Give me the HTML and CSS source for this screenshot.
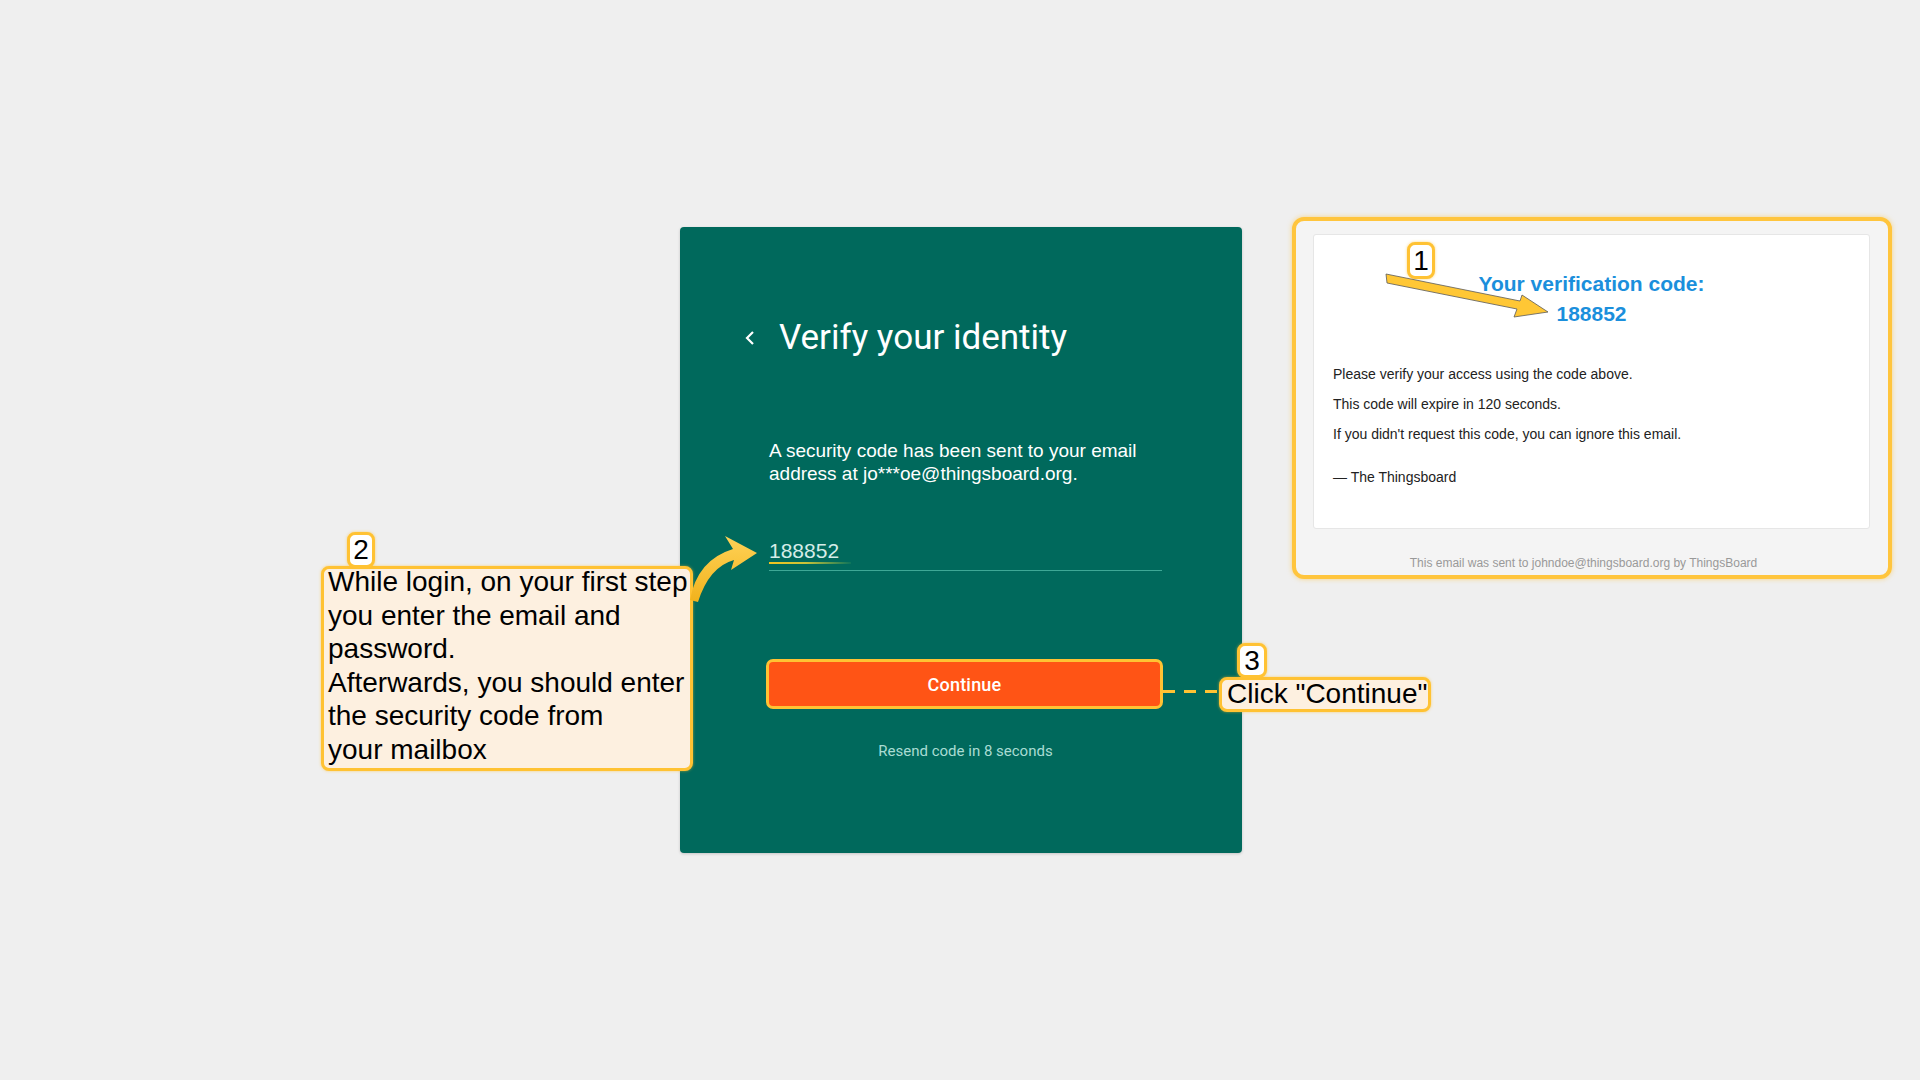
FILE: index.html
```html
<!DOCTYPE html>
<html lang="en">
<head>
<meta charset="utf-8">
<title>Verify your identity</title>
<link rel="stylesheet" href="styles.css">
</head>
<body>
<div class="stage">
  <main class="row">
    <section class="card">
      <header class="card-head">
        <svg class="back" width="12" height="16" viewBox="0 0 12 16"><polyline points="9,2 3,8 9,14" fill="none" stroke="#ffffff" stroke-width="2.2"/></svg>
        <h1 class="title">Verify your identity</h1>
      </header>
      <p class="desc">A security code has been sent to your email address at jo***oe@thingsboard.org.</p>
      <div class="field">
        <span class="field-value">188852</span>
        <span class="field-mark"></span>
      </div>
      <button class="btn">Continue</button>
      <p class="resend">Resend code in 8 seconds</p>
    </section>

    <section class="mail">
      <div class="mail-card">
        <h2 class="mail-title">Your verification code:<br>188852</h2>
        <p class="mail-line">Please verify your access using the code above.</p>
        <p class="mail-line">This code will expire in 120 seconds.</p>
        <p class="mail-line">If you didn't request this code, you can ignore this email.</p>
        <p class="mail-line mail-sign">— The Thingsboard</p>
      </div>
      <p class="mail-foot">This email was sent to johndoe@thingsboard.org by ThingsBoard</p>
    </section>
  </main>

  <div class="note note-2"><div class="note-text">While login, on your first step you enter the email and password.<br>Afterwards, you should enter the security code from<br>your mailbox</div></div>
  <div class="badge badge-2">2</div>

  <div class="dash"></div>
  <div class="note note-3">Click "Continue"</div>
  <div class="badge badge-3">3</div>

  <div class="badge badge-1">1</div>

  <svg class="arrows" width="1920" height="1080" viewBox="0 0 1920 1080">
    <defs>
      <linearGradient id="ag" x1="0" y1="0" x2="0" y2="1">
        <stop offset="0" stop-color="#ffd257"/>
        <stop offset="1" stop-color="#f1b21c"/>
      </linearGradient>
    </defs>
    <path d="M690 600 Q697 560 733 549 L725 536 L757 553 L731 570 L734 560 Q709 567 698 602 Z" fill="url(#ag)"/>
    <polygon points="1386,274 1520,301 1522,295 1548,312 1514,317 1517,309 1387,283" fill="#ffc735" stroke="#5a5a5a" stroke-width="0.8" stroke-linejoin="miter"/>
  </svg>
</div>
</body>
</html>
```
FILE: styles.css
```css
* { box-sizing: border-box; }
html, body { margin: 0; padding: 0; }
body {
  background: #efefef;
  font-family: "Liberation Sans", Arial, sans-serif;
  width: 1920px;
  height: 1080px;
  overflow: hidden;
}
.stage { position: relative; width: 1920px; height: 1080px; }

.row {
  display: flex;
  align-items: flex-start;
  padding: 217px 0 0 680px;
}

/* login card */
.card {
  width: 562px;
  height: 626px;
  margin-top: 10px;
  background: #00695c;
  border-radius: 4px;
  box-shadow: 0 1px 3px rgba(0,0,0,0.18);
  padding: 0 80px 0 89px;
  display: flex;
  flex-direction: column;
}
.card-head {
  display: flex;
  align-items: center;
  margin: 91px 0 0 -25px;
  height: 40px;
}
.back { display: block; margin-right: 23px; }
.title {
  margin: 0;
  font-family: Roboto, sans-serif;
  font-weight: 400;
  font-size: 35px;
  line-height: 40px;
  color: #ffffff;
}
.desc {
  margin: 81px 0 0;
  font-size: 19px;
  line-height: 23px;
  color: #ffffff;
}
.field {
  position: relative;
  margin-top: 54px;
  padding-bottom: 7px;
  border-bottom: 1px solid #3ea896;
}
.field-value {
  display: block;
  font-size: 21px;
  line-height: 24px;
  color: #d5ece8;
}
.field-mark {
  position: absolute;
  left: 0;
  bottom: 6px;
  width: 82px;
  height: 2px;
  background: linear-gradient(90deg, #f2c51f 0%, #c8c23a 45%, rgba(60,160,90,0.2) 100%);
}
.btn {
  margin: 88px 0 0 -3px;
  width: 397px;
  height: 50px;
  background: #ff5415;
  border: 3px solid #ffc233;
  border-radius: 7px;
  color: #ffffff;
  font-family: Roboto, sans-serif;
  font-weight: 500;
  font-size: 18px;
  letter-spacing: 0.2px;
  padding: 0;
}
.resend {
  margin: 32px 0 0;
  text-align: center;
  font-family: Roboto, sans-serif;
  font-size: 15px;
  line-height: 20px;
  color: #a9dcd3;
}

/* email panel */
.mail {
  width: 600px;
  height: 362px;
  margin-left: 50px;
  background: #f4f4f4;
  border: 4px solid #ffc53d;
  border-radius: 12px;
  box-shadow: 0 0 5px rgba(255,190,40,0.55);
  padding: 13px 18px 0 17px;
}
.mail-card {
  height: 295px;
  background: #ffffff;
  border: 1px solid #e6e6e6;
  border-radius: 3px;
  padding: 34px 19px 0;
}
.mail-title {
  margin: 0 0 35px;
  text-align: center;
  color: #1b8fdc;
  font-size: 21px;
  font-weight: 700;
  line-height: 30px;
}
.mail-line {
  margin: 0 0 10px;
  font-size: 14px;
  line-height: 20px;
  color: #222222;
}
.mail-sign { margin-top: 23px; }
.mail-foot {
  margin: 26px 0 0;
  text-align: center;
  font-size: 12px;
  line-height: 16px;
  color: #999999;
  padding-right: 16px;
}

/* annotations */
.note {
  position: absolute;
  background: #fdf0e0;
  border: 3px solid #ffc233;
  border-radius: 8px;
  color: #000000;
  font-size: 28px;
  box-shadow: 0 0 3px rgba(255,190,40,0.6);
}
.note-2 {
  left: 321px;
  top: 566px;
  width: 372px;
  height: 205px;
  line-height: 33.5px;
  padding: 0 0 0 4px;
}
.note-text { margin-top: -4px; }
.note-3 {
  left: 1219px;
  top: 677px;
  width: 212px;
  height: 35px;
  line-height: 27px;
  padding: 0 0 0 5px;
  white-space: nowrap;
}
.badge {
  position: absolute;
  background: #ffffff;
  border: 3px solid #ffc233;
  border-radius: 8px;
  color: #000000;
  font-size: 28px;
  text-align: center;
  box-shadow: 0 0 3px rgba(255,190,40,0.6);
}
.badge-2 { left: 347px; top: 532px; width: 28px; height: 36px; line-height: 30px; }
.badge-3 { left: 1237px; top: 643px; width: 30px; height: 35px; line-height: 29px; }
.badge-1 { left: 1407px; top: 242px; width: 28px; height: 37px; line-height: 31px; }
.dash {
  position: absolute;
  left: 1163px;
  top: 690px;
  width: 57px;
  height: 3px;
  background: repeating-linear-gradient(90deg, #ffc233 0 12px, transparent 12px 21px);
}
.arrows { position: absolute; left: 0; top: 0; pointer-events: none; }
```
